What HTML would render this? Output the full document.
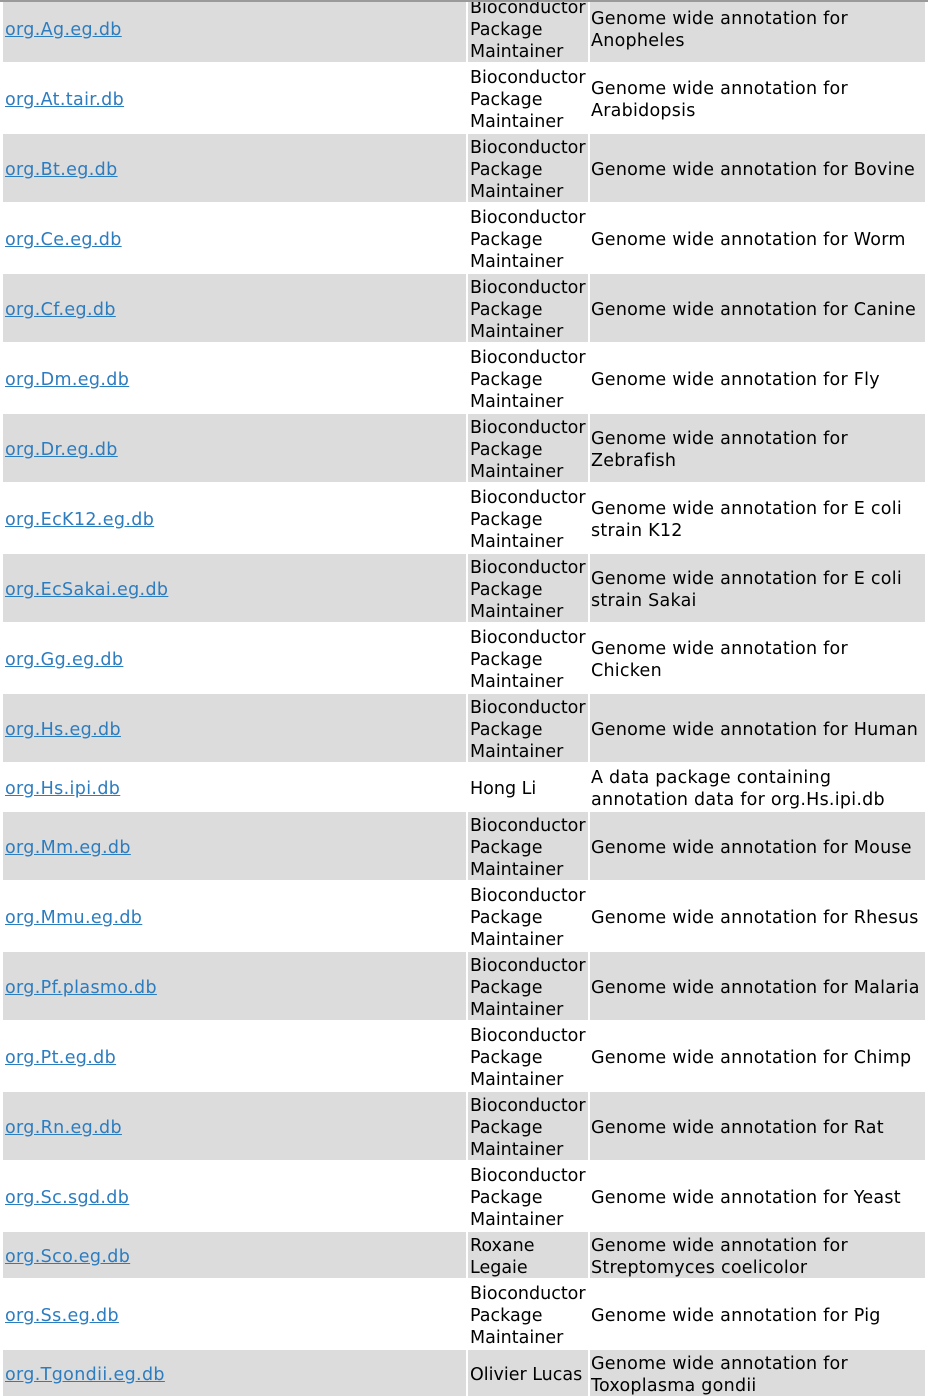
<!DOCTYPE html>
<html><head><meta charset="utf-8"><style>
html,body{margin:0;padding:0;background:#fff;width:928px;height:1396px;overflow:hidden;position:relative}
body{font-family:"DejaVu Sans","Liberation Sans",sans-serif;font-size:17.5px;line-height:22px;color:#000;letter-spacing:0.25px}
.top{position:absolute;left:0;top:0;width:928px;height:2px;background:#9a9a9a;z-index:2}
.c{position:absolute;display:flex;align-items:center;white-space:nowrap;overflow:hidden;box-sizing:border-box;padding-top:4px}
.g{background:#dcdcdc}
.a{left:3px;width:463px;padding-left:2px;letter-spacing:0.35px}
.b{left:468px;width:120px;padding-left:2px;letter-spacing:0}
.d{left:590px;width:335px;padding-left:1px}
a{color:#2c7cc0;text-decoration:underline}
</style></head><body>
<div class="top"></div>
<div id="t"></div>
<script>
var rows=[
["org.Ag.eg.db","B","Genome wide annotation for<br>Anopheles",68],
["org.At.tair.db","B","Genome wide annotation for<br>Arabidopsis",68],
["org.Bt.eg.db","B","Genome wide annotation for Bovine",68],
["org.Ce.eg.db","B","Genome wide annotation for Worm",68],
["org.Cf.eg.db","B","Genome wide annotation for Canine",68],
["org.Dm.eg.db","B","Genome wide annotation for Fly",68],
["org.Dr.eg.db","B","Genome wide annotation for<br>Zebrafish",68],
["org.EcK12.eg.db","B","Genome wide annotation for E coli<br>strain K12",68],
["org.EcSakai.eg.db","B","Genome wide annotation for E coli<br>strain Sakai",68],
["org.Gg.eg.db","B","Genome wide annotation for<br>Chicken",68],
["org.Hs.eg.db","B","Genome wide annotation for Human",68],
["org.Hs.ipi.db","Hong Li","A data package containing<br>annotation data for org.Hs.ipi.db",46],
["org.Mm.eg.db","B","Genome wide annotation for Mouse",68],
["org.Mmu.eg.db","B","Genome wide annotation for Rhesus",68],
["org.Pf.plasmo.db","B","Genome wide annotation for Malaria",68],
["org.Pt.eg.db","B","Genome wide annotation for Chimp",68],
["org.Rn.eg.db","B","Genome wide annotation for Rat",68],
["org.Sc.sgd.db","B","Genome wide annotation for Yeast",68],
["org.Sco.eg.db","Roxane<br>Legaie","Genome wide annotation for<br>Streptomyces coelicolor",46],
["org.Ss.eg.db","B","Genome wide annotation for Pig",68],
["org.Tgondii.eg.db","Olivier Lucas","Genome wide annotation for<br>Toxoplasma gondii",46]
];
var y=-6,h="";
rows.forEach(function(r,i){
 var cls=i%2==0?" g":"";
 var m=r[1]=="B"?"Bioconductor<br>Package<br>Maintainer":r[1];
 var st='top:'+y+'px;height:'+r[3]+'px';
 h+='<div class="c a'+cls+'" style="'+st+'"><a href="#">'+r[0]+'</a></div>';
 h+='<div class="c b'+cls+'" style="'+st+'"><span>'+m+'</span></div>';
 h+='<div class="c d'+cls+'" style="'+st+'"><span>'+r[2]+'</span></div>';
 y+=r[3]+2;
});
document.getElementById('t').innerHTML=h;
</script>
</body></html>
